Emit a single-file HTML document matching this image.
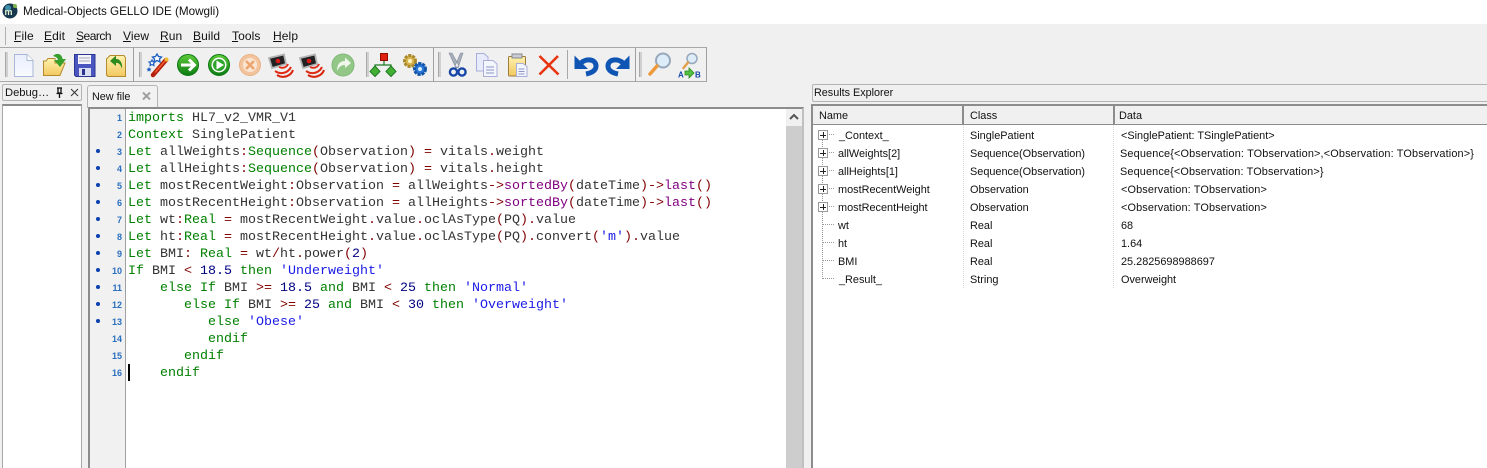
<!DOCTYPE html>
<html><head><meta charset="utf-8"><style>
html,body{margin:0;padding:0}
body{width:1487px;height:468px;overflow:hidden;background:#f0f0f0;position:relative;font-family:"Liberation Sans",sans-serif;font-size:12px;color:#111}
.a{position:absolute}
.t{position:absolute;white-space:pre;line-height:14px}
.m{position:absolute;top:29px;font-size:12px;line-height:14px;color:#111;letter-spacing:.1px}
.m u{text-decoration:underline}
.c{position:absolute;left:128px;margin-top:1px;font:13.33px/17px "Liberation Mono",monospace;white-space:pre;color:#333;height:17px}
.k{color:#008000}.o{color:#800000}.n{color:#000080}.s{color:#1a1ae6}.p{color:#800080}
.ln{position:absolute;left:92px;margin-top:1px;width:30px;text-align:right;font-size:9px;line-height:17px;color:#2a6fc0;font-weight:bold}
.d{position:absolute;left:96px;width:4px;height:4px;border-radius:2px;background:#0a3fb0}
.g{position:absolute;top:52px;width:2px;height:25px;background:#d0d0d0;border-left:1px solid #a8a8a8}
.v{position:absolute;top:47px;width:1px;height:35px;background:#a0a0a0}
svg.i{position:absolute}
.r{position:absolute;margin-top:1px;font-size:10.9px;line-height:14px;white-space:pre;color:#111}
.pb{position:absolute;left:818px;border:1px solid #999;background:#fff;box-sizing:content-box;width:8px;height:8px}
.pb:before{content:"";position:absolute;left:1px;top:4px;width:6px;height:1px;background:#222}
.pb:after{content:"";position:absolute;left:4px;top:1px;width:1px;height:6px;background:#222}
.hd{position:absolute;border-bottom:1px dotted #999;height:0}
</style></head><body>
<div class="a" style="left:0;top:0;width:1487px;height:24px;background:#fff"></div>
<svg class="i" style="left:2px;top:3px" width="16" height="16" viewBox="0 0 16 16"><circle cx="8" cy="8" r="7.500" fill="#17384f"/><circle cx="6" cy="5" r="3" fill="#3f8fa8"/><text x="2.500" y="12" font-family="Liberation Sans" font-size="9" font-weight="bold" fill="#e8f4d0">m</text><circle cx="13" cy="3" r="2" fill="#7db54a"/></svg>
<div class="t" style="left:23px;top:5px;font-size:11.7px;color:#111">Medical-Objects GELLO IDE (Mowgli)</div>

<div class="a" style="left:5px;top:27px;width:1px;height:18px;background:#b0b0b0"></div>
<div class="m" style="left:14px"><u>F</u>ile</div>
<div class="m" style="left:44px"><u>E</u>dit</div>
<div class="m" style="left:76px;letter-spacing:-.5px"><u>S</u>earch</div>
<div class="m" style="left:123px"><u>V</u>iew</div>
<div class="m" style="left:160px"><u>R</u>un</div>
<div class="m" style="left:193px"><u>B</u>uild</div>
<div class="m" style="left:232px"><u>T</u>ools</div>
<div class="m" style="left:273px"><u>H</u>elp</div>

<!-- toolbar -->
<div class="a" style="left:0;top:47px;width:707px;height:1px;background:#a8a8a8"></div>
<div class="a" style="left:0;top:81px;width:707px;height:1px;background:#a8a8a8"></div>
<div class="v" style="left:133px"></div><div class="v" style="left:433px"></div><div class="v" style="left:635px"></div><div class="v" style="left:706px"></div>
<div class="a" style="left:567px;top:50px;width:1px;height:29px;background:#a8a8a8"></div>
<div class="g" style="left:5px"></div><div class="g" style="left:139px"></div><div class="g" style="left:366px"></div><div class="g" style="left:438px"></div><div class="g" style="left:639px"></div>

<svg class="i" style="left:0;top:47px" width="710" height="35" viewBox="0 47 710 35">
<defs>
<linearGradient id="gg" x1="0" y1="0" x2="0" y2="1"><stop offset="0" stop-color="#5fcb3a"/><stop offset="1" stop-color="#0a7a12"/></linearGradient>
<linearGradient id="yy" x1="0" y1="0" x2="0" y2="1"><stop offset="0" stop-color="#fff2b0"/><stop offset="1" stop-color="#f2c860"/></linearGradient>
<linearGradient id="bb" x1="0" y1="0" x2="0" y2="1"><stop offset="0" stop-color="#e8eefc"/><stop offset="1" stop-color="#f8faff"/></linearGradient>
</defs>
<!-- new -->
<path d="M14.500 54.500H27L33 60.500V76.500H14.500Z" fill="url(#bb)" stroke="#a9b8d8"/><path d="M27 54.500V60.500H33" fill="#fff" stroke="#a9b8d8"/>
<!-- open -->
<path d="M43.500 75.500V61H46L48 58.500H55V63H65L60 75.500Z" fill="url(#yy)" stroke="#b58a2c"/>
<path d="M53 56C57 52 62 54 62.500 59H66L60 67L54 60H58C57.500 57.500 55 56.500 53 56Z" fill="#37a02c"/>
<!-- save -->
<path d="M74.500 54.500H95V76.500H76L74.500 75Z" fill="#4a55c0" stroke="#2a3590"/><rect x="78" y="55" width="13" height="9" fill="#f4f4fa"/><path d="M79 58h11M79 61h11" stroke="#aab"/><rect x="79" y="68" width="12" height="8" fill="#d8dcf0"/><rect x="82" y="69" width="3" height="6" fill="#2a3590"/>
<!-- revert -->
<path d="M106.500 59L110 55.500H124L125.500 58V76.500H108L106.500 75Z" fill="url(#yy)" stroke="#b58a2c"/>
<path d="M122 69C123 62 119 58.500 116 59V55.500L110 61L116 66V63C118.500 62.500 121 65 122 69Z" fill="#2d8a1f"/>
<!-- wand -->
<path d="M153 75L166 60" stroke="#b3210f" stroke-width="4.500" stroke-linecap="round"/><path d="M155 72.500L165 61" stroke="#ef5a2a" stroke-width="1.500"/><circle cx="166.500" cy="59.500" r="2" fill="#f2bc32"/>
<path d="M157 54l1.500 2.500 3 .5-2 2 .5 3-3-1.500-3 1.500.5-3-2-2 3-.5z" fill="#fff" stroke="#1b5ec0" stroke-width="1.300"/><path d="M152 60l1 1.800 2 .3-1.400 1.400.3 2-1.900-1-1.900 1 .3-2-1.400-1.400 2-.3z" fill="#fff" stroke="#1b5ec0" stroke-width="1.200"/><path d="M149 67l.8 1.500 1.700.2-1.200 1.200.3 1.700-1.600-.8-1.600.8.3-1.700-1.200-1.200 1.700-.2z" fill="#1b5ec0"/>
<!-- run -->
<circle cx="188" cy="65" r="10.500" fill="url(#gg)" stroke="#0c7a12"/><path d="M181 65H194M189 59.500L194.500 65L189 70.500" fill="none" stroke="#fff" stroke-width="3"/>
<circle cx="219" cy="65" r="10.500" fill="url(#gg)" stroke="#0c7a12"/><circle cx="219" cy="65" r="7.500" fill="#fff"/><circle cx="219" cy="65" r="6" fill="#2ca52a"/><path d="M216.500 60.500L224 65L216.500 69.500Z" fill="#fff"/>
<circle cx="250" cy="65" r="10.500" fill="#f2c39c" stroke="#e9b285"/><circle cx="250" cy="65" r="7" fill="#f9e5d3"/><path d="M246 61L254 69M254 61L246 69" stroke="#eda46d" stroke-width="2.500"/>
<!-- observers -->
<g><path d="M269 58L284 54.500L286 64L272 68Z" fill="#222" stroke="#b4b4b4" stroke-width="1.800"/><circle cx="278" cy="61" r="2.300" fill="#d91818"/><path d="M279 67C283 69 287 67 288 64" fill="none" stroke="#e02a14" stroke-width="1.800"/><path d="M275 71C281 75 288 73 291 67" fill="none" stroke="#e02a14" stroke-width="2"/><path d="M277 75C283 79 291 76 293 70" fill="none" stroke="#d8240f" stroke-width="2"/></g>
<g transform="translate(31 0)"><path d="M269 58L284 54.500L286 64L272 68Z" fill="#222" stroke="#b4b4b4" stroke-width="1.800"/><circle cx="278" cy="61" r="2.300" fill="#d91818"/><path d="M279 67C283 69 287 67 288 64" fill="none" stroke="#e02a14" stroke-width="1.800"/><path d="M275 71C281 75 288 73 291 67" fill="none" stroke="#e02a14" stroke-width="2"/><path d="M277 75C283 79 291 76 293 70" fill="none" stroke="#d8240f" stroke-width="2"/></g>
<circle cx="343" cy="65" r="11" fill="#92c788" stroke="#82b878"/><path d="M337 71C337 64 340 61 345 61V57.500L351 63L345 68V65C341 65 339 67 337 71Z" fill="#f0f8ec"/>
<!-- tree -->
<rect x="380.500" y="53.500" width="7" height="7" fill="#e02010" stroke="#901000"/><path d="M384 61V65M375 68V65H391V68" fill="none" stroke="#1d7a22" stroke-width="1.200"/><path d="M375 66L380 71.500L375 76.500L370 71.500Z" fill="#43b035" stroke="#1d7a22"/><path d="M391 66L396 71.500L391 76.500L386 71.500Z" fill="#43b035" stroke="#1d7a22"/>
<!-- gears -->
<circle cx="410" cy="61" r="5.500" fill="#d8b550" stroke="#a98a2a" stroke-width="3" stroke-dasharray="3 1"/><circle cx="410" cy="61" r="2" fill="#fff6c8"/><circle cx="420" cy="69" r="5.500" fill="#2a78d8" stroke="#1555a8" stroke-width="3" stroke-dasharray="3 1"/><circle cx="420" cy="69" r="2" fill="#d8ecff"/>
<!-- cut -->
<path d="M449 53L456 68L459 66L452 53ZM463 53L458 68L455 66L460.500 53Z" fill="#a8b0bc" stroke="#7f8896" stroke-width=".6"/><circle cx="453.500" cy="72" r="3.600" fill="none" stroke="#1746a8" stroke-width="2.400"/><circle cx="462" cy="72" r="3.600" fill="none" stroke="#1746a8" stroke-width="2.400"/>
<!-- copy -->
<path d="M476.500 53.500H484L488 57V71H476.500Z" fill="#e8ecfa" stroke="#a8aed8"/><path d="M483.500 60.500H493L497 64V76.500H483.500Z" fill="#f4f6fd" stroke="#a8aed8"/><path d="M486 67h8M486 70h8M486 73h8" stroke="#8d95c8"/>
<!-- paste -->
<rect x="508.500" y="56.500" width="17" height="19.500" rx="1" fill="url(#yy)" stroke="#9c7a40"/><rect x="512" y="54" width="10" height="4" fill="#c8ccd8" stroke="#888"/><path d="M516.500 63.500H523L527 66.500V76.500H516.500Z" fill="#f4f6fd" stroke="#a8aed8"/><path d="M518.500 69h6M518.500 71.500h6M518.500 74h6" stroke="#8d95c8"/>
<!-- delete -->
<path d="M539.500 56L558.500 74.500M558 56L539.500 74.500" stroke="#e8330f" stroke-width="2.600"/>
<!-- undo / redo -->
<path d="M581 63C586 58 596 59 596 66C596 71 591 73 586 74" fill="none" stroke="#0f55b4" stroke-width="5"/><path d="M574.500 55.500V69H588Z" fill="#0f55b4"/>
<path d="M623 63C618 58 608 59 608 66C608 71 613 73 618 74" fill="none" stroke="#0f55b4" stroke-width="5"/><path d="M629.500 55.500V69H616Z" fill="#0f55b4"/>
<!-- find -->
<circle cx="663" cy="60.500" r="7" fill="#dcecf8" stroke="#98a8bc" stroke-width="2"/><path d="M657 66L650 74" stroke="#ef9a3a" stroke-width="3.500" stroke-linecap="round"/>
<circle cx="692" cy="58.500" r="5" fill="#dcecf8" stroke="#98a8bc" stroke-width="1.500"/><path d="M688 62.500L683.500 68" stroke="#e0a04a" stroke-width="2.500" stroke-linecap="round"/>
<path d="M685 71H689V68L694 73L689 78V75H685Z" fill="#52c040" stroke="#2a8a20" stroke-width=".8"/>
<text x="678" y="77.500" font-family="Liberation Sans" font-size="8" font-weight="bold" fill="#1446a8">A</text><text x="695" y="77.500" font-family="Liberation Sans" font-size="8" font-weight="bold" fill="#1446a8">B</text>
</svg>

<!-- debug pane -->
<div class="a" style="left:2px;top:84px;width:80px;height:17px;border:1px solid #b4b4b4;border-radius:2px;box-sizing:border-box"></div>
<div class="t" style="left:5px;top:86px;font-size:11.2px">Debug…</div>
<svg class="i" style="left:54px;top:87px" width="26" height="12" viewBox="0 0 26 12"><path d="M3 1H8M4 1V6H7V1M2.500 6.500H8.500M5.500 7V11" fill="none" stroke="#111" stroke-width="1.300"/><path d="M17 2L24 9M24 2L17 9" stroke="#333" stroke-width="1"/></svg>
<div class="a" style="left:2px;top:104px;width:80px;height:364px;background:#fff;border:1px solid #a8a8a8;border-top:2px solid #8c8c8c;border-bottom:0;box-sizing:border-box"></div>

<!-- editor tab -->
<div class="a" style="left:87px;top:85px;width:71px;height:23px;background:#f2f2f2;border:1px solid #b4b4b4;border-bottom:0;border-radius:3px 3px 0 0;box-sizing:border-box"></div>
<div class="t" style="left:92px;top:90px;font-size:10.8px">New file</div>
<svg class="i" style="left:142px;top:92px" width="9" height="8" viewBox="0 0 9 8"><path d="M1 0.500L8 7.500M8 0.500L1 7.500" stroke="#a0a0a0" stroke-width="2"/></svg>

<!-- editor -->
<div class="a" style="left:88px;top:107px;width:716px;height:361px;background:#fff;border:2px solid #8c8c8c;border-bottom:0;box-sizing:border-box;border-right:2px solid #c0c0c0"></div>
<div class="a" style="left:90px;top:109px;width:35px;height:359px;background:#f1f1f1;border-right:1px solid #a0a0a0"></div>
<div class="a" style="left:786px;top:109px;width:16px;height:359px;background:#f0f0f0"></div>
<div class="a" style="left:786px;top:126px;width:16px;height:342px;background:#cdcdcd"></div>
<svg class="i" style="left:789px;top:113px" width="10" height="8" viewBox="0 0 10 8"><path d="M1 6L5 2L9 6" fill="none" stroke="#555" stroke-width="2"/></svg>

<div class="ln" style="top:109px">1</div><div class="ln" style="top:126px">2</div><div class="ln" style="top:143px">3</div><div class="ln" style="top:160px">4</div><div class="ln" style="top:177px">5</div><div class="ln" style="top:194px">6</div><div class="ln" style="top:211px">7</div><div class="ln" style="top:228px">8</div><div class="ln" style="top:245px">9</div><div class="ln" style="top:262px">10</div><div class="ln" style="top:279px">11</div><div class="ln" style="top:296px">12</div><div class="ln" style="top:313px">13</div><div class="ln" style="top:330px">14</div><div class="ln" style="top:347px">15</div><div class="ln" style="top:364px">16</div>
<div class="d" style="top:149px"></div><div class="d" style="top:166px"></div><div class="d" style="top:183px"></div><div class="d" style="top:200px"></div><div class="d" style="top:217px"></div><div class="d" style="top:234px"></div><div class="d" style="top:251px"></div><div class="d" style="top:268px"></div><div class="d" style="top:285px"></div><div class="d" style="top:302px"></div><div class="d" style="top:319px"></div>

<div class="c" style="top:109px"><span class="k">imports</span> HL7_v2_VMR_V1</div>
<div class="c" style="top:126px"><span class="k">Context</span> SinglePatient</div>
<div class="c" style="top:143px"><span class="k">Let</span> allWeights<span class="o">:</span><span class="k">Sequence</span><span class="o">(</span>Observation<span class="o">)</span> <span class="o">=</span> vitals<span class="o">.</span>weight</div>
<div class="c" style="top:160px"><span class="k">Let</span> allHeights<span class="o">:</span><span class="k">Sequence</span><span class="o">(</span>Observation<span class="o">)</span> <span class="o">=</span> vitals<span class="o">.</span>height</div>
<div class="c" style="top:177px"><span class="k">Let</span> mostRecentWeight<span class="o">:</span>Observation <span class="o">=</span> allWeights<span class="o">-&gt;</span><span class="p">sortedBy</span><span class="o">(</span>dateTime<span class="o">)-&gt;</span><span class="p">last</span><span class="o">()</span></div>
<div class="c" style="top:194px"><span class="k">Let</span> mostRecentHeight<span class="o">:</span>Observation <span class="o">=</span> allHeights<span class="o">-&gt;</span><span class="p">sortedBy</span><span class="o">(</span>dateTime<span class="o">)-&gt;</span><span class="p">last</span><span class="o">()</span></div>
<div class="c" style="top:211px"><span class="k">Let</span> wt<span class="o">:</span><span class="k">Real</span> <span class="o">=</span> mostRecentWeight<span class="o">.</span>value<span class="o">.</span>oclAsType<span class="o">(</span>PQ<span class="o">).</span>value</div>
<div class="c" style="top:228px"><span class="k">Let</span> ht<span class="o">:</span><span class="k">Real</span> <span class="o">=</span> mostRecentHeight<span class="o">.</span>value<span class="o">.</span>oclAsType<span class="o">(</span>PQ<span class="o">).</span>convert<span class="o">(</span><span class="s">'m'</span><span class="o">).</span>value</div>
<div class="c" style="top:245px"><span class="k">Let</span> BMI<span class="o">:</span> <span class="k">Real</span> <span class="o">=</span> wt<span class="o">/</span>ht<span class="o">.</span>power<span class="o">(</span><span class="n">2</span><span class="o">)</span></div>
<div class="c" style="top:262px"><span class="k">If</span> BMI <span class="o">&lt;</span> <span class="n">18.5</span> <span class="k">then</span> <span class="s">'Underweight'</span></div>
<div class="c" style="top:279px">    <span class="k">else</span> <span class="k">If</span> BMI <span class="o">&gt;=</span> <span class="n">18.5</span> <span class="k">and</span> BMI <span class="o">&lt;</span> <span class="n">25</span> <span class="k">then</span> <span class="s">'Normal'</span></div>
<div class="c" style="top:296px">       <span class="k">else</span> <span class="k">If</span> BMI <span class="o">&gt;=</span> <span class="n">25</span> <span class="k">and</span> BMI <span class="o">&lt;</span> <span class="n">30</span> <span class="k">then</span> <span class="s">'Overweight'</span></div>
<div class="c" style="top:313px">          <span class="k">else</span> <span class="s">'Obese'</span></div>
<div class="c" style="top:330px">          <span class="k">endif</span></div>
<div class="c" style="top:347px">       <span class="k">endif</span></div>
<div class="c" style="top:364px">    <span class="k">endif</span></div>
<div class="a" style="left:128px;top:364px;width:2px;height:17px;background:#000"></div>

<!-- results -->
<div class="a" style="left:812px;top:84px;width:675px;height:18px;border:1px solid #b4b4b4;border-right:0;border-radius:2px 0 0 2px;box-sizing:border-box"></div>
<div class="t" style="left:814px;top:86px;font-size:10.8px">Results Explorer</div>
<div class="a" style="left:811px;top:104px;width:676px;height:364px;background:#fff;border-left:2px solid #8c8c8c;border-top:2px solid #8c8c8c;box-sizing:border-box"></div>
<div class="a" style="left:813px;top:106px;width:674px;height:19px;background:#f0f0f0;border-bottom:1px solid #8c8c8c;box-sizing:border-box"></div>
<div class="a" style="left:962px;top:106px;width:2px;height:19px;background:#8c8c8c"></div>
<div class="a" style="left:1113px;top:106px;width:2px;height:19px;background:#8c8c8c"></div>
<div class="r" style="left:819px;top:108px">Name</div><div class="r" style="left:970px;top:108px">Class</div><div class="r" style="left:1119px;top:108px">Data</div>

<div class="a" style="left:963px;top:125px;height:163px;border-left:1px dotted #d8d8d8"></div>
<div class="a" style="left:1113px;top:125px;height:163px;border-left:1px dotted #d8d8d8"></div>
<div class="a" style="left:822px;top:135px;height:144px;border-left:1px dotted #999"></div>

<div class="pb" style="top:130px"></div><div class="pb" style="top:148px"></div><div class="pb" style="top:166px"></div><div class="pb" style="top:184px"></div><div class="pb" style="top:202px"></div>
<div class="hd" style="left:829px;top:134px;width:5px"></div><div class="hd" style="left:829px;top:152px;width:5px"></div><div class="hd" style="left:829px;top:170px;width:5px"></div><div class="hd" style="left:829px;top:188px;width:5px"></div><div class="hd" style="left:829px;top:206px;width:5px"></div>
<div class="hd" style="left:823px;top:224px;width:11px"></div><div class="hd" style="left:823px;top:242px;width:11px"></div><div class="hd" style="left:823px;top:260px;width:11px"></div><div class="hd" style="left:823px;top:278px;width:11px"></div>

<div class="r" style="left:839px;top:128px">_Context_</div><div class="r" style="left:970px;top:128px">SinglePatient</div><div class="r" style="left:1121px;top:128px">&lt;SinglePatient: TSinglePatient&gt;</div>
<div class="r" style="left:838px;top:146px">allWeights[2]</div><div class="r" style="left:970px;top:146px">Sequence(Observation)</div><div class="r" style="left:1120px;top:146px;letter-spacing:.15px">Sequence{&lt;Observation: TObservation&gt;,&lt;Observation: TObservation&gt;}</div>
<div class="r" style="left:838px;top:164px">allHeights[1]</div><div class="r" style="left:970px;top:164px">Sequence(Observation)</div><div class="r" style="left:1120px;top:164px;letter-spacing:.13px">Sequence{&lt;Observation: TObservation&gt;}</div>
<div class="r" style="left:838px;top:182px">mostRecentWeight</div><div class="r" style="left:970px;top:182px">Observation</div><div class="r" style="left:1121px;top:182px;letter-spacing:.13px">&lt;Observation: TObservation&gt;</div>
<div class="r" style="left:838px;top:200px">mostRecentHeight</div><div class="r" style="left:970px;top:200px">Observation</div><div class="r" style="left:1121px;top:200px;letter-spacing:.13px">&lt;Observation: TObservation&gt;</div>
<div class="r" style="left:838px;top:218px">wt</div><div class="r" style="left:970px;top:218px">Real</div><div class="r" style="left:1121px;top:218px">68</div>
<div class="r" style="left:838px;top:236px">ht</div><div class="r" style="left:970px;top:236px">Real</div><div class="r" style="left:1121px;top:236px">1.64</div>
<div class="r" style="left:838px;top:254px">BMI</div><div class="r" style="left:970px;top:254px">Real</div><div class="r" style="left:1121px;top:254px">25.2825698988697</div>
<div class="r" style="left:839px;top:272px">_Result_</div><div class="r" style="left:970px;top:272px">String</div><div class="r" style="left:1121px;top:272px">Overweight</div>
</body></html>
